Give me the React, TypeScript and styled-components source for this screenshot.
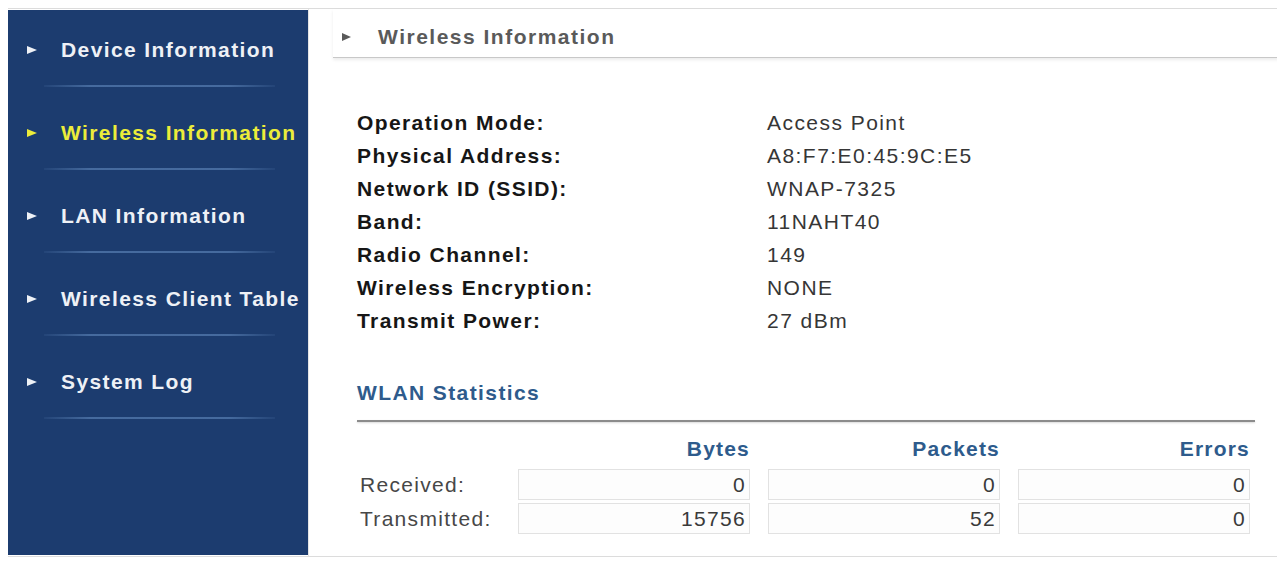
import styled, { createGlobalStyle } from 'styled-components';

const GlobalStyle = createGlobalStyle`
  body {
    margin: 8px;
    background: #ffffff;
    font-family: 'Liberation Sans', Arial, sans-serif;
  }
`;

const Frame = styled.div`
  display: flex;
  width: 1272px;
  height: 549px;
  box-sizing: border-box;
  border: 1px solid #dcdcdc;
  border-left: none;
  background: #ffffff;
`;

const Sidebar = styled.nav`
  width: 300px;
  margin-top: 1px;
  margin-bottom: 1px;
  background: #1c3c6f;
  display: flex;
  flex-direction: column;
  gap: 6px;
  flex-shrink: 0;
`;

const MenuItem = styled.div`
  display: flex;
  flex-direction: column;
`;

const MenuLink = styled.a<{ $active?: boolean }>`
  display: flex;
  align-items: center;
  gap: 24px;
  padding: 23px 0 19px 19px;
  height: 33px;
  font-size: 21px;
  font-weight: bold;
  letter-spacing: 1.4px;
  white-space: nowrap;
  color: ${({ $active }) => ($active ? '#ecec3a' : '#eef1f6')};
  text-decoration: none;
  cursor: pointer;
`;

const Arrow = styled.span<{ $color: string; $size?: number }>`
  display: inline-block;
  width: 0;
  height: 0;
  border-top: ${({ $size = 4.5 }) => $size}px solid transparent;
  border-bottom: ${({ $size = 4.5 }) => $size}px solid transparent;
  border-left: ${({ $size = 4.5 }) => $size * 2.3}px solid ${({ $color }) => $color};
  flex-shrink: 0;
`;

const Divider = styled.div`
  height: 2px;
  margin: 0 33px 0 36px;
  background: linear-gradient(
    to right,
    rgba(80, 118, 170, 0.15),
    rgba(80, 118, 170, 0.8) 20%,
    rgba(80, 118, 170, 0.8) 80%,
    rgba(80, 118, 170, 0.15)
  );
`;

const Main = styled.main`
  flex: 1;
  display: flex;
  flex-direction: column;
  border-left: 1px solid #e4e4e4;
`;

const Header = styled.div`
  display: flex;
  align-items: center;
  gap: 27px;
  height: 40px;
  padding: 8px 0 0 9px;
  margin-left: 24px;
  border-bottom: 1px solid #c8c8c8;
  box-shadow: 0 2px 3px rgba(0, 0, 0, 0.08);
`;

const HeaderTitle = styled.h1`
  margin: 0;
  font-size: 21px;
  font-weight: bold;
  letter-spacing: 1.5px;
  color: #5a5a5a;
`;

const Content = styled.div`
  padding: 48px 24px 0 48px;
  display: flex;
  flex-direction: column;
`;

const InfoGrid = styled.dl`
  display: grid;
  grid-template-columns: 410px auto;
  grid-auto-rows: 33px;
  align-items: center;
  margin: 0;
`;

const InfoLabel = styled.dt`
  font-size: 21px;
  font-weight: bold;
  letter-spacing: 1.4px;
  color: #161616;
`;

const InfoValue = styled.dd`
  margin: 0;
  font-size: 21px;
  letter-spacing: 1.45px;
  color: #363636;
`;

const SectionTitle = styled.h2`
  margin: 41px 0 0;
  line-height: 30px;
  font-size: 21px;
  font-weight: bold;
  letter-spacing: 1.4px;
  color: #2e5b8c;
`;

const Rule = styled.hr`
  margin: 12px 0 0;
  height: 2px;
  border: none;
  background: #8c8c8c;
  box-shadow: 0 1px 2px rgba(0, 0, 0, 0.15);
`;

const StatsGrid = styled.div`
  display: grid;
  grid-template-columns: 143px repeat(3, 232px);
  column-gap: 18px;
  margin-top: 12px;
  width: 893px;
`;

const ColHead = styled.div`
  height: 30px;
  line-height: 30px;
  margin-bottom: 5px;
  text-align: right;
  font-size: 21px;
  font-weight: bold;
  letter-spacing: 1.2px;
  color: #2e5b8c;
`;

const RowLabel = styled.div`
  padding-left: 3px;
  line-height: 31px;
  margin-bottom: 3px;
  font-size: 21px;
  letter-spacing: 1.3px;
  color: #474747;
`;

const Cell = styled.div`
  height: 29px;
  line-height: 29px;
  margin-bottom: 3px;
  padding-right: 3px;
  text-align: right;
  font-size: 21px;
  letter-spacing: 1.3px;
  color: #3a3a3a;
  border: 1px solid #e2e2e2;
  background: #fdfdfd;
`;

const menu = [
  'Device Information',
  'Wireless Information',
  'LAN Information',
  'Wireless Client Table',
  'System Log',
];

const info = [
  ['Operation Mode:', 'Access Point'],
  ['Physical Address:', 'A8:F7:E0:45:9C:E5'],
  ['Network ID (SSID):', 'WNAP-7325'],
  ['Band:', '11NAHT40'],
  ['Radio Channel:', '149'],
  ['Wireless Encryption:', 'NONE'],
  ['Transmit Power:', '27 dBm'],
];

const stats = [
  { label: 'Received:', values: [0, 0, 0] },
  { label: 'Transmitted:', values: [15756, 52, 0] },
];

export default function App() {
  return (
    <>
      <GlobalStyle />
      <Frame>
        <Sidebar>
          {menu.map((item) => {
            const active = item === 'Wireless Information';
            return (
              <MenuItem key={item}>
                <MenuLink $active={active}>
                  <Arrow $color={active ? '#ecec3a' : '#eef1f6'} />
                  {item}
                </MenuLink>
                <Divider />
              </MenuItem>
            );
          })}
        </Sidebar>
        <Main>
          <Header>
            <Arrow $color="#5a5a5a" $size={4} />
            <HeaderTitle>Wireless Information</HeaderTitle>
          </Header>
          <Content>
            <InfoGrid>
              {info.map(([label, value]) => (
                <>
                  <InfoLabel key={label}>{label}</InfoLabel>
                  <InfoValue key={label + '-v'}>{value}</InfoValue>
                </>
              ))}
            </InfoGrid>
            <SectionTitle>WLAN Statistics</SectionTitle>
            <Rule />
            <StatsGrid>
              <div />
              <ColHead>Bytes</ColHead>
              <ColHead>Packets</ColHead>
              <ColHead>Errors</ColHead>
              {stats.map((row) => (
                <>
                  <RowLabel key={row.label}>{row.label}</RowLabel>
                  {row.values.map((v, i) => (
                    <Cell key={row.label + i}>{v}</Cell>
                  ))}
                </>
              ))}
            </StatsGrid>
          </Content>
        </Main>
      </Frame>
    </>
  );
}
